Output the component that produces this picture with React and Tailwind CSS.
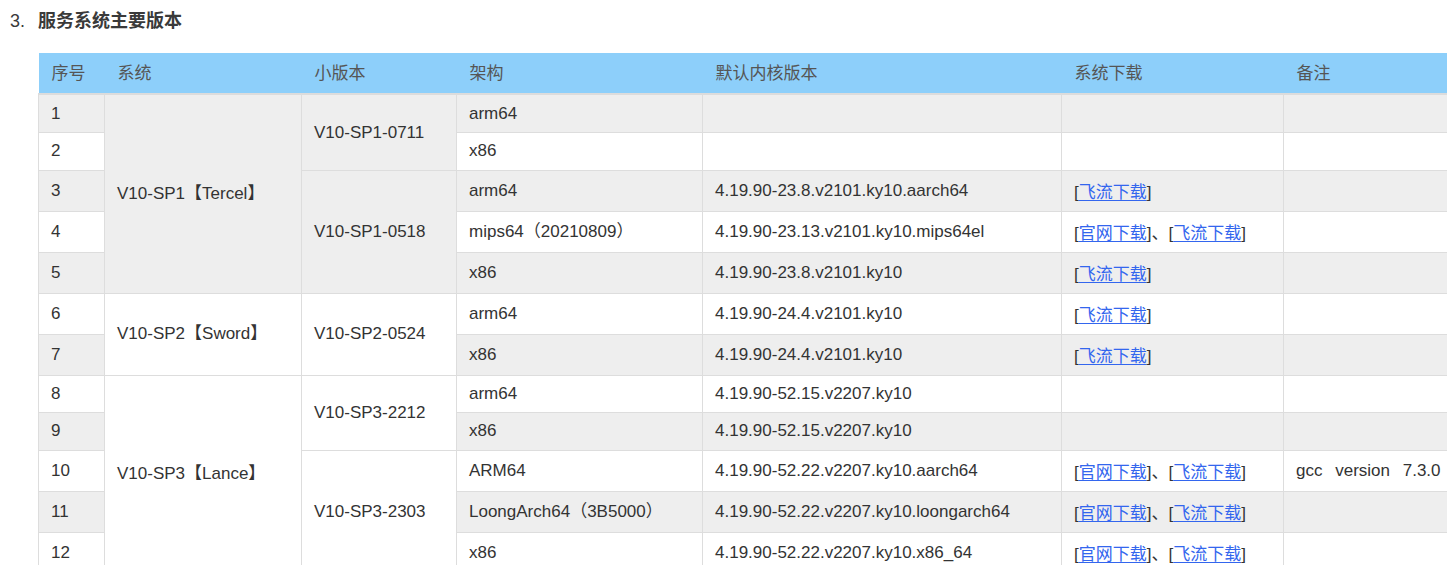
import React from "react";

const FONT = { fontFamily: '"Liberation Sans", Arial, "Noto Sans CJK SC", sans-serif' };

function Link({ children }) {
  return (
    <span>
      [<a href="#" className="text-[#3366ee] underline underline-offset-2">{children}</a>]
    </span>
  );
}

function Dl({ kind }) {
  if (kind === "fl") return <Link>飞流下载</Link>;
  if (kind === "both")
    return (
      <span>
        <Link>官网下载</Link>、<Link>飞流下载</Link>
      </span>
    );
  return null;
}

const rows = [
  { n: 1, arch: "arm64", k: "", dl: "", h: "h-[38px]" },
  { n: 2, arch: "x86", k: "", dl: "", h: "h-[38px]" },
  { n: 3, arch: "arm64", k: "4.19.90-23.8.v2101.ky10.aarch64", dl: "fl", h: "h-[41px]" },
  { n: 4, arch: "mips64（20210809）", k: "4.19.90-23.13.v2101.ky10.mips64el", dl: "both", h: "h-[41px]" },
  { n: 5, arch: "x86", k: "4.19.90-23.8.v2101.ky10", dl: "fl", h: "h-[41px]" },
  { n: 6, arch: "arm64", k: "4.19.90-24.4.v2101.ky10", dl: "fl", h: "h-[41px]" },
  { n: 7, arch: "x86", k: "4.19.90-24.4.v2101.ky10", dl: "fl", h: "h-[41px]" },
  { n: 8, arch: "arm64", k: "4.19.90-52.15.v2207.ky10", dl: "", h: "h-[37px]" },
  { n: 9, arch: "x86", k: "4.19.90-52.15.v2207.ky10", dl: "", h: "h-[38px]" },
  { n: 10, arch: "ARM64", k: "4.19.90-52.22.v2207.ky10.aarch64", dl: "both", h: "h-[41px]", note: "gcc version 7.3.0" },
  { n: 11, arch: "LoongArch64（3B5000）", k: "4.19.90-52.22.v2207.ky10.loongarch64", dl: "both", h: "h-[41px]" },
  { n: 12, arch: "x86", k: "4.19.90-52.22.v2207.ky10.x86_64", dl: "both", h: "h-[41px]" },
];

const sys = { 1: ["V10-SP1【Tercel】", 5], 6: ["V10-SP2【Sword】", 2], 8: ["V10-SP3【Lance】", 5] };
const sub = {
  1: ["V10-SP1-0711", 2],
  3: ["V10-SP1-0518", 3],
  6: ["V10-SP2-0524", 2],
  8: ["V10-SP3-2212", 2],
  10: ["V10-SP3-2303", 3],
};

const td = "border border-[#dddddd] px-[12px] align-middle whitespace-nowrap";

export default function App() {
  return (
    <div className="h-[565px] w-[1447px] overflow-hidden bg-white text-[#333333]" style={FONT}>
      <div className="flex items-center pt-[9px] leading-[24px] text-[18px]">
        <span className="w-[38px] pl-[10px] text-[#3a3a3a]">3.</span>
        <span className="font-bold text-[#3a3a3a]">服务系统主要版本</span>
      </div>
      <div className="ml-[38px] mt-[20px]">
        <table className="w-[1465px] table-fixed border-collapse text-[17px]">
          <colgroup>
            <col className="w-[66px]" />
            <col className="w-[197px]" />
            <col className="w-[155px]" />
            <col className="w-[246px]" />
            <col className="w-[359px]" />
            <col className="w-[222px]" />
            <col className="w-[220px]" />
          </colgroup>
          <thead>
            <tr className="bg-[#8dcffa] text-[#555555]">
              {["序号", "系统", "小版本", "架构", "默认内核版本", "系统下载", "备注"].map((h) => (
                <th
                  key={h}
                  className="h-[41px] border-b-2 border-[#dcdcdc] px-[13px] pt-[2px] text-left font-normal align-middle"
                >
                  {h}
                </th>
              ))}
            </tr>
          </thead>
          <tbody>
            {rows.map((r) => (
              <tr key={r.n} className={r.n % 2 === 1 ? "bg-[#eeeeee]" : "bg-white"}>
                <td className={`${td} ${r.h}`}>{r.n}</td>
                {sys[r.n] && (
                  <td className={td} rowSpan={sys[r.n][1]}>
                    {sys[r.n][0]}
                  </td>
                )}
                {sub[r.n] && (
                  <td className={td} rowSpan={sub[r.n][1]}>
                    {sub[r.n][0]}
                  </td>
                )}
                <td className={td}>{r.arch}</td>
                <td className={td}>{r.k}</td>
                <td className={td}>
                  <span className="relative top-[2px]">
                    <Dl kind={r.dl} />
                  </span>
                </td>
                <td className={`${td} [word-spacing:8px]`}>{r.note || ""}</td>
              </tr>
            ))}
          </tbody>
        </table>
      </div>
    </div>
  );
}
